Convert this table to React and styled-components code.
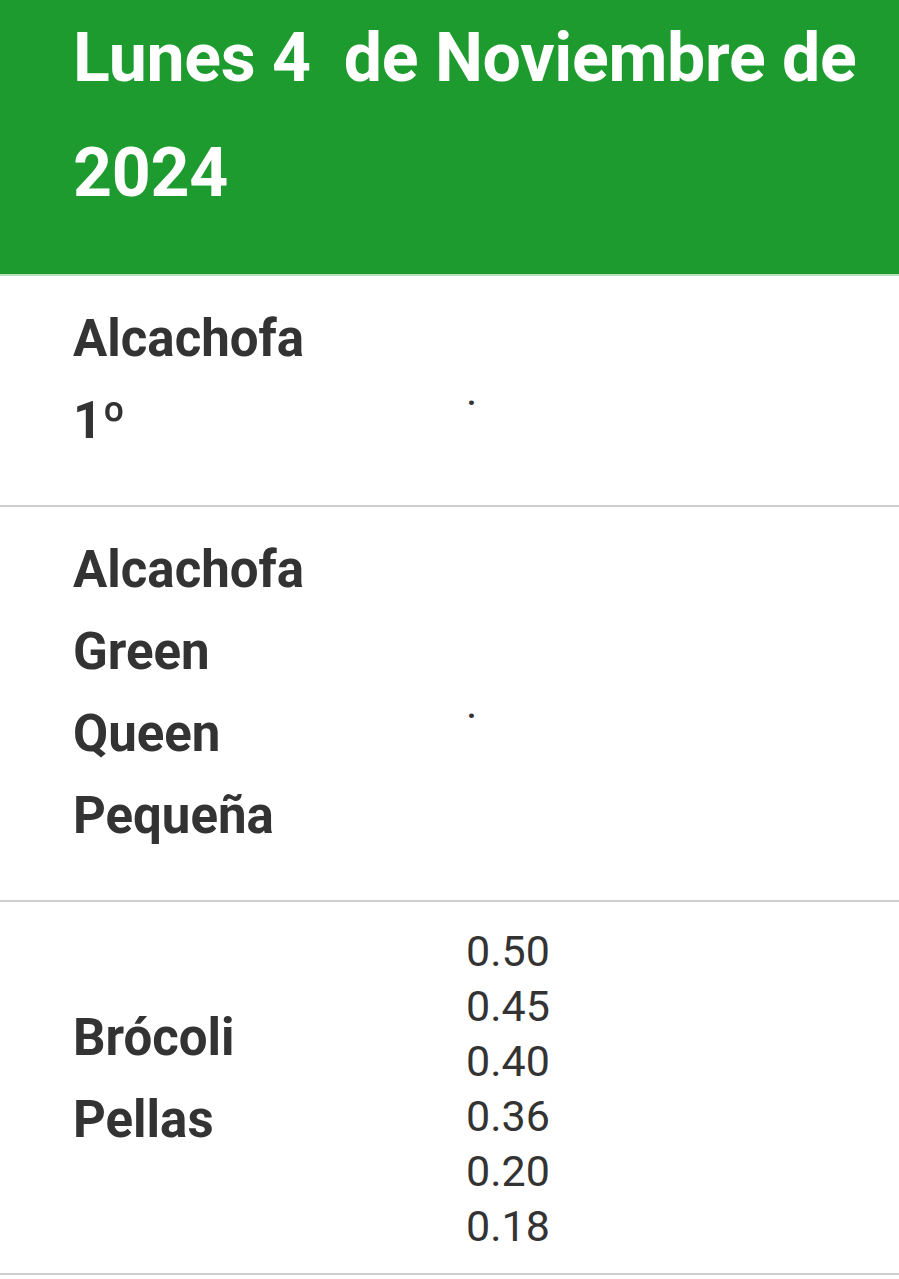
import React from 'react';
import styled, { createGlobalStyle } from 'styled-components';

const GlobalStyle = createGlobalStyle`
  html, body {
    margin: 0;
    padding: 0;
    background: #fff;
  }
  body {
    font-family: Roboto, "Noto Sans", sans-serif;
    color: #333;
  }
`;

const rows = [
  { name: ['Alcachofa', '1º'], prices: ['.'] },
  { name: ['Alcachofa', 'Green', 'Queen', 'Pequeña'], prices: ['.'] },
  {
    name: ['Brócoli', 'Pellas'],
    prices: ['0.50', '0.45', '0.40', '0.36', '0.20', '0.18'],
  },
];

const Page = styled.div`
  width: 899px;
`;

const Header = styled.header`
  background: #1e9b2e;
  border-bottom: 2px solid #b9dfbd;
  padding: 1px 20px 0 73px;
  height: 276px;
  box-sizing: border-box;
`;

const Title = styled.h1`
  margin: 0;
  color: #fff;
  font-family: Roboto, sans-serif;
  font-weight: 700;
  font-size: 68px;
  letter-spacing: -0.3px;
  line-height: 115px;
`;

const Row = styled.div`
  display: grid;
  grid-template-columns: 393px 1fr;
  align-items: center;
  padding: ${p => (p.$list ? '22px 0 19px 73px' : '22px 0 22px 73px')};
  border-bottom: 2px solid #cfcfcf;
`;

const Name = styled.div`
  font-weight: 700;
  font-size: 51px;
  line-height: 82px;
  padding-bottom: 21px;
  color: #333;
`;

const Prices = styled.div`
  font-size: 43px;
  line-height: 55px;
  color: #333;
`;

export default function App() {
  return (
    <Page>
      <GlobalStyle />
      <Header>
        <Title>
          Lunes 4&nbsp; de Noviembre de 2024
        </Title>
      </Header>
      {rows.map((r, i) => (
        <Row key={i} $list={r.prices.length > 1}>
          <Name>
            {r.name.map(n => (
              <div key={n}>{n}</div>
            ))}
          </Name>
          <Prices>
            {r.prices.map(p => (
              <div key={p}>{p}</div>
            ))}
          </Prices>
        </Row>
      ))}
    </Page>
  );
}
